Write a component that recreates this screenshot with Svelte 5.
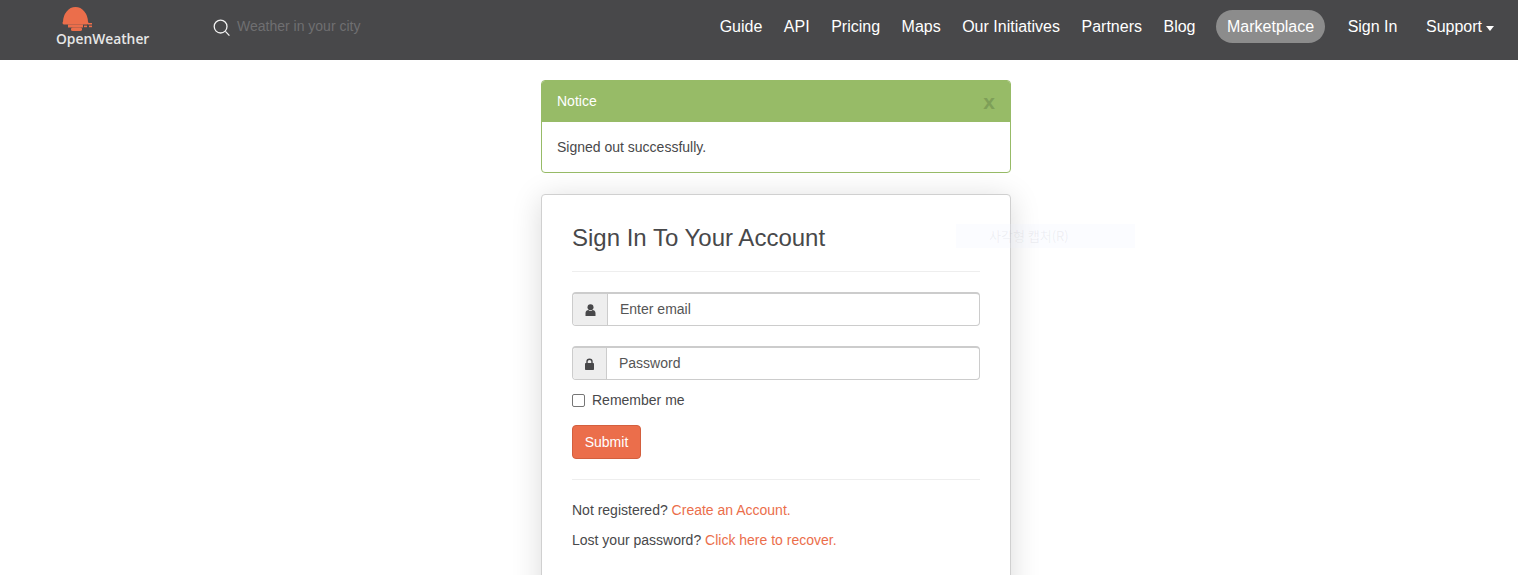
<script lang="ts">
  const links = ['Guide', 'API', 'Pricing', 'Maps', 'Our Initiatives', 'Partners', 'Blog'];
</script>

<header class="topbar">
  <a class="logo" href="#top" aria-label="OpenWeather">
    <svg width="31" height="25" viewBox="0 0 31 25" fill="#eb6e4b">
      <path d="M1 15 A12.5 15 0 0 1 26 15 Z" />
      <rect x="0.5" y="14.5" width="26" height="3" rx="1.4" />
      <rect x="26" y="16" width="4" height="1.5" />
      <rect x="6" y="17.5" width="15" height="3" />
      <rect x="22" y="18.6" width="3" height="1.6" />
      <rect x="27" y="18.6" width="3" height="1.6" />
      <rect x="9" y="20.5" width="11" height="3.5" rx="1.6" />
    </svg>
    <span>OpenWeather</span>
  </a>
  <div class="search">
    <svg width="18" height="18" viewBox="0 0 18 18" fill="none" stroke="#f2f2f2">
      <circle cx="7.6" cy="7.6" r="6.4" stroke-width="1.3" />
      <path d="M12.4 12.4 L16.4 16.6" stroke-width="1.3" />
    </svg>
    <span>Weather in your city</span>
  </div>
  <nav>
    {#each links as l}
      <a href="#top">{l}</a>
    {/each}
    <a class="pill" href="#top">Marketplace</a>
    <a class="signin" href="#top">Sign In</a>
    <a class="support" href="#top">Support<i class="caret"></i></a>
  </nav>
</header>

<main>
  <section class="notice">
    <div class="notice-head">
      <span>Notice</span>
      <b>x</b>
    </div>
    <div class="notice-body">Signed out successfully.</div>
  </section>

  <section class="card">
    <h3>Sign In To Your Account</h3>
    <hr />
    <div class="group first">
      <span class="addon wide">
        <svg width="11" height="12" viewBox="0 0 11 12" fill="#48484a">
          <circle cx="5.5" cy="3.2" r="3" />
          <path d="M0.5 12 V9 C0.5 7.2 2 6 3.4 6 C4 6.6 4.7 6.9 5.5 6.9 C6.3 6.9 7 6.6 7.6 6 C9 6 10.5 7.2 10.5 9 V12 Z" />
        </svg>
      </span>
      <span class="field">Enter email</span>
    </div>
    <div class="group">
      <span class="addon">
        <svg width="11" height="12" viewBox="0 0 11 12">
          <rect x="1" y="5" width="9" height="7" rx="0.8" fill="#48484a" />
          <path d="M3 5.5 V3.6 C3 2.2 4 1.2 5.5 1.2 C7 1.2 8 2.2 8 3.6 V5.5" fill="none" stroke="#48484a" stroke-width="1.4" />
        </svg>
      </span>
      <span class="field">Password</span>
    </div>
    <label class="remember"><i class="check"></i>Remember me</label>
    <button type="button">Submit</button>
    <hr class="lower" />
    <p>Not registered? <a href="#top">Create an Account.</a></p>
    <p>Lost your password? <a href="#top">Click here to recover.</a></p>
  </section>
</main>

<div class="ghost">사각형 캡처(R)</div>

<style>
  :global(body) {
    margin: 0;
    height: 575px;
    overflow: hidden;
    background: #fff;
    font-family: 'Liberation Sans', Arial, sans-serif;
    font-size: 14px;
    color: #48484a;
  }
  a {
    text-decoration: none;
  }
  .topbar {
    height: 60px;
    box-sizing: border-box;
    padding-bottom: 7px;
    background: #48484a;
    display: flex;
    align-items: center;
  }
  .logo {
    align-self: flex-start;
    margin-left: 55px;
    padding-top: 7px;
    width: 94px;
    display: flex;
    flex-direction: column;
    align-items: flex-start;
    color: #e6e6e6;
    font-family: 'Open Sans', sans-serif;
    font-weight: 600;
    font-size: 13.8px;
    line-height: 16px;
    white-space: nowrap;
  }
  .logo svg {
    display: block;
    margin-left: 7px;
  }
  .logo span {
    margin-top: -1px;
    margin-left: 1px;
  }
  .search {
    margin-left: 64px;
    display: flex;
    align-items: center;
    gap: 6px;
    color: #6f6f71;
    font-size: 14px;
  }
  .search svg {
    margin-top: 2px;
  }
  .search span {
    margin-top: -2px;
  }
  nav {
    margin-left: auto;
    margin-right: 24px;
    display: flex;
    align-items: center;
    gap: 21.5px;
    font-size: 16px;
  }
  nav a {
    color: #fff;
    white-space: nowrap;
  }
  .pill {
    background: #8c8c8c;
    border-radius: 17px;
    height: 33px;
    line-height: 33px;
    padding: 0 11px;
    margin-left: -1px;
  }
  .signin {
    margin-left: 1px;
  }
  .support {
    margin-left: 7px;
    display: flex;
    align-items: center;
  }
  .caret {
    width: 0;
    height: 0;
    margin-left: 4px;
    margin-top: 3px;
    border-left: 4.5px solid transparent;
    border-right: 4.5px solid transparent;
    border-top: 5px solid #fff;
  }
  main {
    width: 470px;
    margin: 20px 0 0 541px;
  }
  .notice {
    height: 93px;
    box-sizing: border-box;
    border: 1px solid #97bb67;
    border-radius: 4px;
    overflow: hidden;
  }
  .notice-head {
    height: 41px;
    box-sizing: border-box;
    padding: 0 15px 2px;
    background: #97bb67;
    color: #fff;
    display: flex;
    align-items: center;
    justify-content: space-between;
  }
  .notice-head b {
    font-size: 21px;
    line-height: 21px;
    color: #7e9f58;
    margin-top: 2px;
  }
  .notice-body {
    padding: 16px 15px 0;
    line-height: 18px;
  }
  .card {
    margin-top: 21px;
    height: 420px;
    box-sizing: border-box;
    border: 1px solid #d0d0d0;
    border-radius: 4px;
    padding: 30px;
    background: #fff;
    box-shadow: 0 4px 30px rgba(0, 0, 0, 0.15);
  }
  h3 {
    margin: 0;
    font-size: 24px;
    font-weight: 400;
    line-height: 26px;
  }
  hr {
    border: 0;
    border-top: 1px solid #eee;
    margin: 20px 0;
  }
  .group {
    display: flex;
    height: 34px;
    box-sizing: border-box;
    border: 1px solid #ccc;
    border-top-width: 2px;
    border-radius: 4px;
    margin-top: 20px;
  }
  .group.first {
    margin-top: 0;
  }
  .addon {
    width: 33px;
    background: #eee;
    border-right: 1px solid #ccc;
    display: flex;
    align-items: center;
    justify-content: center;
    border-radius: 3px 0 0 3px;
  }
  .addon.wide {
    width: 34px;
  }
  .field {
    padding-left: 12px;
    line-height: 31px;
    color: #555;
  }
  .remember {
    display: flex;
    align-items: center;
    margin-top: 10px;
    line-height: 20px;
  }
  .check {
    width: 11px;
    height: 11px;
    border: 1px solid #767676;
    border-radius: 2px;
    margin-right: 7px;
    background: #fff;
  }
  button {
    display: block;
    margin-top: 15px;
    width: 69px;
    height: 34px;
    background: #eb6e4b;
    border: 1px solid #d35f3e;
    border-radius: 4px;
    color: #fff;
    font: inherit;
    padding: 0;
  }
  hr.lower {
    margin: 20px 0 21px;
  }
  p {
    margin: 0 0 12px;
    line-height: 18px;
  }
  p a {
    color: #eb6e4b;
  }
  .ghost {
    position: absolute;
    left: 956px;
    top: 224px;
    width: 179px;
    height: 24px;
    background: rgba(235, 240, 255, 0.2);
    color: rgba(120, 120, 130, 0.1);
    font-family: 'Noto Sans CJK KR', sans-serif;
    font-size: 13px;
    line-height: 24px;
    text-indent: 33px;
  }
</style>
